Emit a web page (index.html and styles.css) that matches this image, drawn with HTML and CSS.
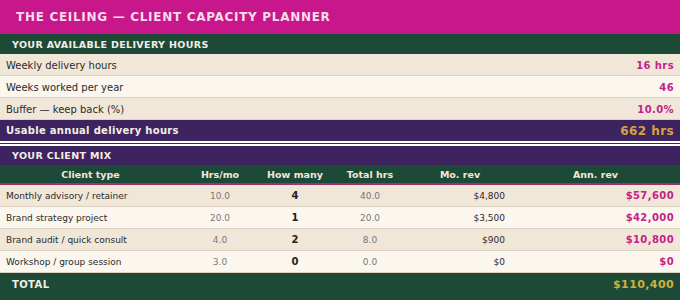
FILE: index.html
```html
<!DOCTYPE html>
<html>
<head>
<meta charset="utf-8">
<link rel="stylesheet" href="styles.css">
</head>
<body>
<div class="page">
  <div class="title">THE CEILING — CLIENT CAPACITY PLANNER</div>
  <div class="section green">YOUR AVAILABLE DELIVERY HOURS</div>
  <div class="irow beige"><span class="lbl">Weekly delivery hours</span><span class="val">16 hrs</span></div>
  <div class="irow cream"><span class="lbl">Weeks worked per year</span><span class="val">46</span></div>
  <div class="irow beige"><span class="lbl">Buffer — keep back (%)</span><span class="val">10.0%</span></div>
  <div class="usable"><span>Usable annual delivery hours</span><span class="gold">662 hrs</span></div>
  <div class="sep"></div>
  <div class="section purple">YOUR CLIENT MIX</div>
  <div class="trow thead">
    <span class="c">Client type</span>
    <span class="c">Hrs/mo</span>
    <span class="c">How many</span>
    <span class="c">Total hrs</span>
    <span class="c">Mo. rev</span>
    <span class="c">Ann. rev</span>
  </div>
  <div class="trow beige">
    <span class="l">Monthly advisory / retainer</span>
    <span class="c grey">10.0</span>
    <span class="c num">4</span>
    <span class="c grey">40.0</span>
    <span class="r">$4,800</span>
    <span class="r ann">$57,600</span>
  </div>
  <div class="trow cream">
    <span class="l">Brand strategy project</span>
    <span class="c grey">20.0</span>
    <span class="c num">1</span>
    <span class="c grey">20.0</span>
    <span class="r">$3,500</span>
    <span class="r ann">$42,000</span>
  </div>
  <div class="trow beige">
    <span class="l">Brand audit / quick consult</span>
    <span class="c grey">4.0</span>
    <span class="c num">2</span>
    <span class="c grey">8.0</span>
    <span class="r">$900</span>
    <span class="r ann">$10,800</span>
  </div>
  <div class="trow cream">
    <span class="l">Workshop / group session</span>
    <span class="c grey">3.0</span>
    <span class="c num">0</span>
    <span class="c grey">0.0</span>
    <span class="r">$0</span>
    <span class="r ann">$0</span>
  </div>
  <div class="total"><span>TOTAL</span><span class="gold2">$110,400</span></div>
</div>
</body>
</html>
```
FILE: styles.css
```css
* { box-sizing: border-box; margin: 0; padding: 0; }
body { margin: 0; font-family: "DejaVu Sans", sans-serif; background: #fff; }
.page { width: 680px; height: 300px; overflow: hidden; }
.title {
  height: 34px; background: #C8178A; color: #F9DCEC;
  font-weight: bold; font-size: 12px; letter-spacing: 0.7px;
  display: flex; align-items: center; padding-left: 16px;
}
.section {
  height: 20px; display: flex; align-items: center; padding-left: 12px;
  font-weight: bold; font-size: 9.5px; letter-spacing: 0.35px; color: #F4EEE4;
}
.green { background: #1C4A37; }
.purple { background: #3D2360; height: 19px; }
.beige { background: #F1E7D9; }
.cream { background: #FBF7EF; }
.irow {
  height: 22px; border-bottom: 1px solid #DCD1C1;
  display: flex; justify-content: space-between; align-items: center;
  padding: 0 6px 0 6px; font-size: 10px; color: #2A2A2A;
}
.irow span { position: relative; top: 1px; }
.val { color: #C41F8A; font-weight: bold; font-size: 10px; letter-spacing: 0.4px; }
.usable {
  height: 21px; background: #3D2360; color: #F4EEE4;
  display: flex; justify-content: space-between; align-items: center;
  padding: 0 6px; font-weight: bold; font-size: 10px; letter-spacing: 0.3px;
}
.gold { color: #D6A23E; font-size: 12px; letter-spacing: 0.4px; }
.sep { height: 5px; background: #3D2360; border-top: 2px solid #fff; border-bottom: 2px solid #fff; }
.trow {
  display: grid; grid-template-columns: 181px 78px 72px 78px 102px 1fr;
  height: 22px; border-bottom: 1px solid #DCD1C1; align-items: center;
  font-size: 9px; color: #2A2A2A;
}
.thead {
  background: #1C4A37; color: #F1E8DA; font-weight: bold; font-size: 9.5px;
  height: 20px; border-bottom: 2px solid #A0306E;
}
.trow .c { text-align: center; }
.trow .l { padding-left: 6px; }
.trow .r { text-align: right; padding-right: 6px; }
.grey { color: #777; }
.num { font-weight: bold; font-size: 10px; color: #222; }
.ann { color: #C41F8A; font-weight: bold; font-size: 10px; letter-spacing: 0.4px; }
.total {
  height: 29px; background: #1C4A37; color: #F4EEE4;
  display: flex; justify-content: space-between; align-items: center;
  padding: 0 6px 7px 12px; font-weight: bold; font-size: 10px; letter-spacing: 0.4px;
}
.gold2 { color: #D0B03C; font-size: 11px; }
```
